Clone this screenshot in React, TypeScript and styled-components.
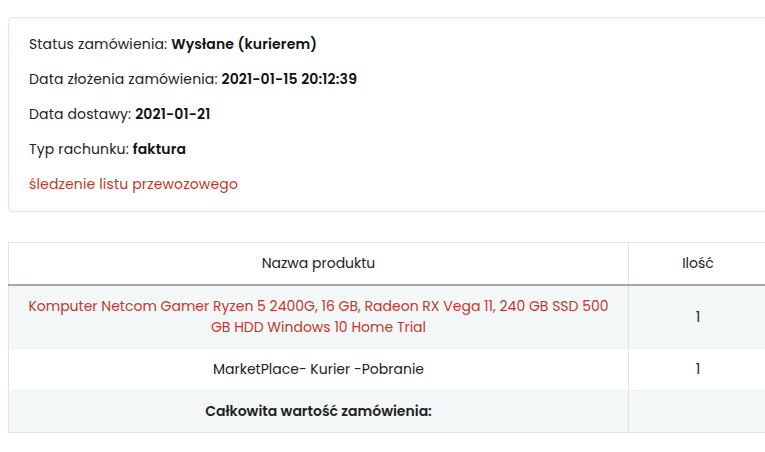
import React from "react";
import styled, { createGlobalStyle } from "styled-components";

const Global = createGlobalStyle`
  html, body { margin: 0; padding: 0; background: #fff; overflow: hidden; }
  body {
    font-family: "Poppins", Inter, "Noto Sans", sans-serif;
    font-size: 14px;
    color: #212529;
  }
  * { box-sizing: border-box; }
`;

const Page = styled.div`
  width: 770px;
  padding: 17px 0 0 8px;
  display: flex;
  flex-direction: column;
  gap: 30px;
`;

const Card = styled.div`
  border: 1px solid #e6e6e6;
  border-radius: 4px;
  box-shadow: inset 0 0 0 2px #fafafa, 0 1px 2px rgba(0, 0, 0, 0.04);
  padding: 16px 20px;
  display: flex;
  flex-direction: column;
  gap: 14px;
  letter-spacing: 0.15px;
`;

const Line = styled.p`
  margin: 0;
  line-height: 21px;
  color: #222;
`;

const Strong = styled.b`
  font-weight: 600;
  color: #111;
`;

const Link = styled.a`
  color: #c0392b;
  text-decoration: none;
  line-height: 21px;
`;

const Table = styled.table`
  width: 760px;
  border-collapse: collapse;
  border: 1px solid #e2e2e2;

  tbody tr:last-child td {
    border-bottom-color: #dedede;
  }
`;

const Th = styled.th<{ $w?: number }>`
  font-weight: 400;
  text-align: center;
  padding: 10px 12px;
  line-height: 21px;
  border: 1px solid #e2e2e2;
  border-bottom: 2px solid #a8a8a8;
  color: #222;
  width: ${(p) => (p.$w ? `${p.$w}px` : "auto")};
`;

const Tr = styled.tr<{ $striped?: boolean }>`
  background: ${(p) => (p.$striped ? "#f4f7f8" : "#fff")};
`;

const Td = styled.td<{ $bold?: boolean }>`
  text-align: center;
  padding: 10px 12px;
  line-height: 21px;
  border-left: 1px solid #e2e2e2;
  border-right: 1px solid #e2e2e2;
  border-top: 1px solid #f0f2f3;
  border-bottom: 1px solid #f0f2f3;
  color: #222;
  font-weight: ${(p) => (p.$bold ? 600 : 400)};
`;

const ProductLink = styled.a`
  color: #c0392b;
  text-decoration: none;
`;

export default function App() {
  return (
    <>
      <Global />
      <Page>
        <Card>
          <Line>
            Status zamówienia: <Strong>Wysłane (kurierem)</Strong>
          </Line>
          <Line>
            Data złożenia zamówienia: <Strong>2021-01-15 20:12:39</Strong>
          </Line>
          <Line>
            Data dostawy: <Strong>2021-01-21</Strong>
          </Line>
          <Line>
            Typ rachunku: <Strong>faktura</Strong>
          </Line>
          <Link href="#">śledzenie listu przewozowego</Link>
        </Card>
        <Table>
          <thead>
            <tr>
              <Th $w={620}>Nazwa produktu</Th>
              <Th>Ilość</Th>
            </tr>
          </thead>
          <tbody>
            <Tr $striped>
              <Td>
                <ProductLink href="#">
                  Komputer Netcom Gamer Ryzen 5 2400G, 16 GB, Radeon RX Vega 11, 240 GB SSD 500 GB HDD Windows 10 Home Trial
                </ProductLink>
              </Td>
              <Td>1</Td>
            </Tr>
            <Tr>
              <Td>MarketPlace- Kurier -Pobranie</Td>
              <Td>1</Td>
            </Tr>
            <Tr $striped>
              <Td $bold>Całkowita wartość zamówienia:</Td>
              <Td></Td>
            </Tr>
          </tbody>
        </Table>
      </Page>
    </>
  );
}
